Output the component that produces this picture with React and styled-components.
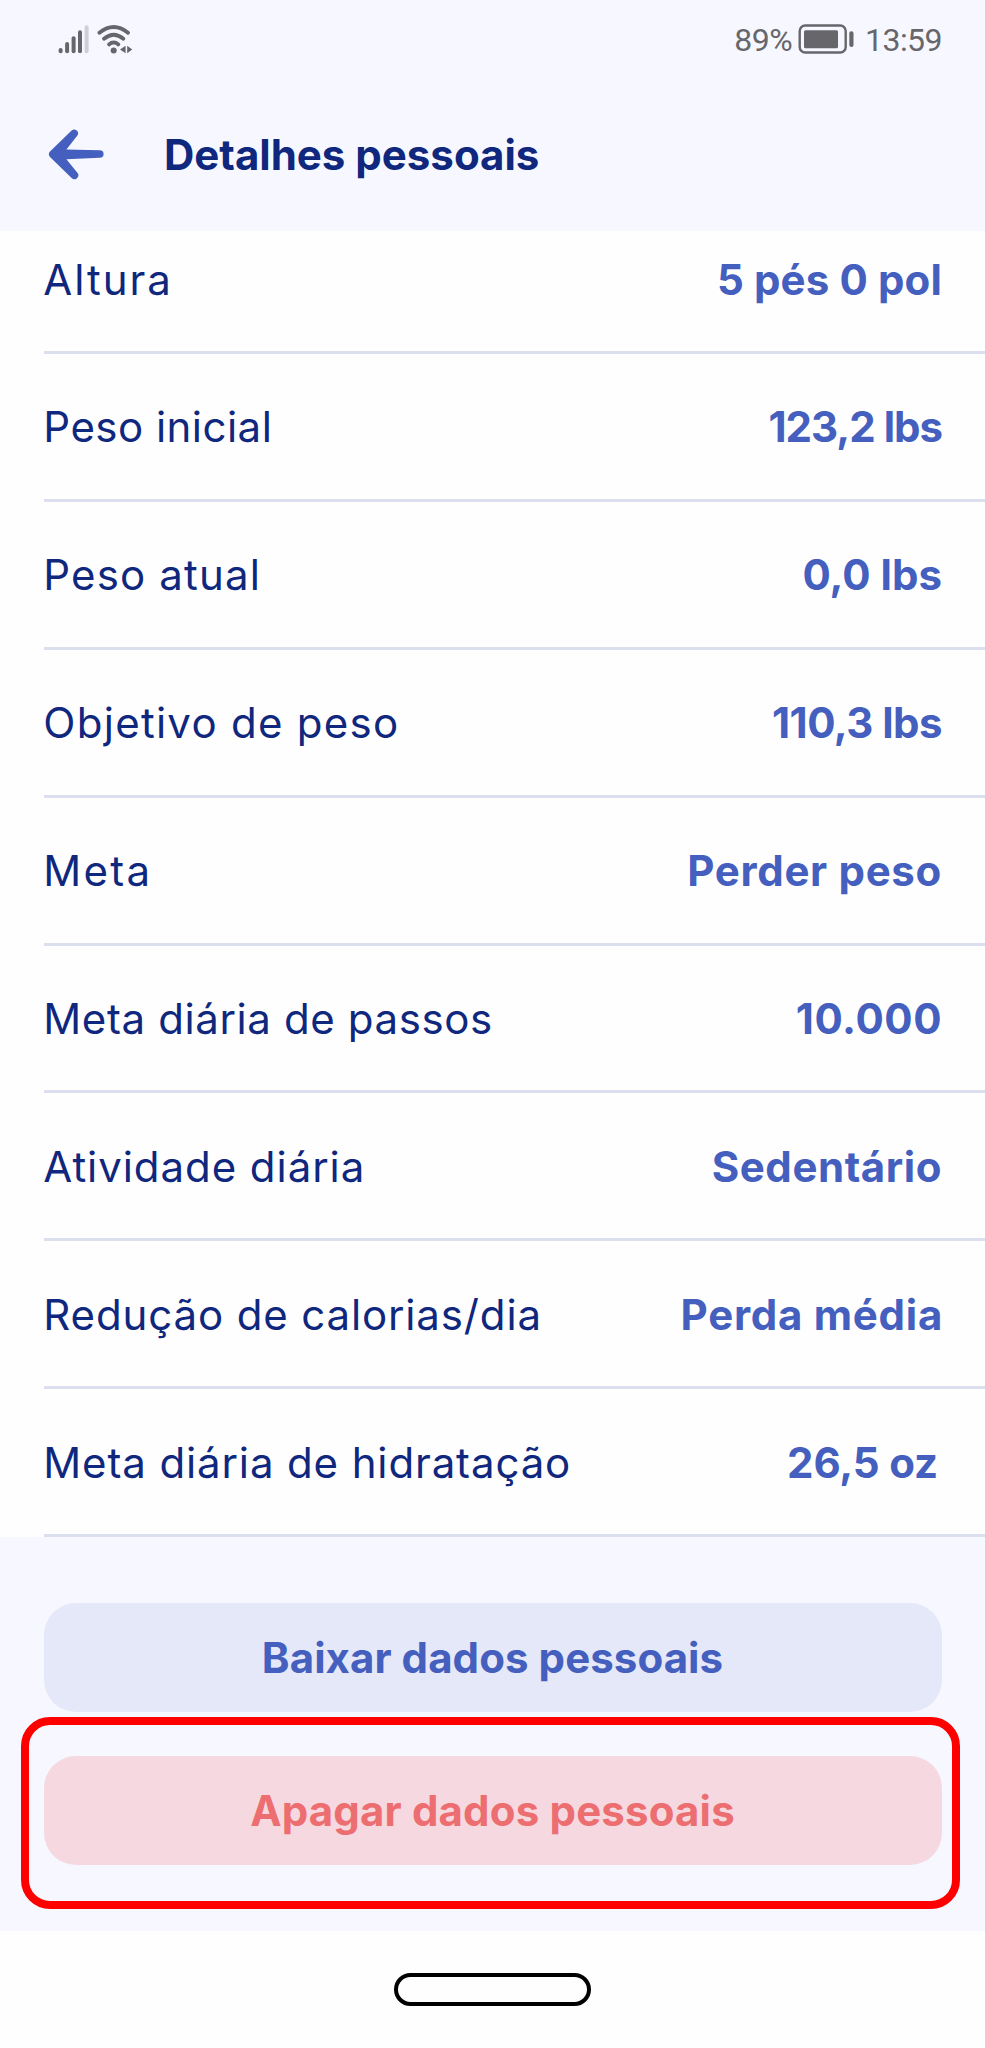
import React from "react";
import styled, { createGlobalStyle } from "styled-components";

const details = [
  { label: "Altura", value: "5 pés 0 pol", track: 1.97, valueTrack: 0.13 },
  { label: "Peso inicial", value: "123,2 lbs", track: 0.47, valueTrack: -1.01 },
  { label: "Peso atual", value: "0,0 lbs", track: 1.15, valueTrack: 0 },
  { label: "Objetivo de peso", value: "110,3 lbs", track: 1.27, valueTrack: -0.54 },
  { label: "Meta", value: "Perder peso", track: 2.31, valueTrack: 0.68 },
  { label: "Meta diária de passos", value: "10.000", track: 0.61, valueTrack: 0.53 },
  { label: "Atividade diária", value: "Sedentário", track: 0.94, valueTrack: 0.56 },
  { label: "Redução de calorias/dia", value: "Perda média", track: 0.86, valueTrack: 0.73, end: -1 },
  { label: "Meta diária de hidratação", value: "26,5 oz", track: 0.87, valueTrack: -0.16, end: 4 },
];

const SignalIcon = () => (
  <svg width="32" height="30" viewBox="58 23 32 30" strokeWidth="4" strokeLinecap="round">
    <g stroke="#66666b">
      <path d="M60.6 49v1.2" />
      <path d="M67.1 43v7.2" />
      <path d="M73.6 37.2v13" />
      <path d="M80 31.2v19" />
    </g>
    <path d="M86.6 26.2v24" stroke="#cfcfd6" />
  </svg>
);

const WifiIcon = () => (
  <svg width="36" height="30" viewBox="97 23 36 30" fill="none" stroke="#66666b" strokeWidth="3.8" strokeLinecap="round">
    <path d="M99.4 31.8Q113.7 20.2 128 31.8" />
    <path d="M104 37.8Q113.7 29.6 123.4 37.8" />
    <path d="M109 43.4Q113.7 39.6 118.4 43.4" />
    <circle cx="113.7" cy="49.4" r="3" fill="#66666b" stroke="none" />
    <path d="M125.6 44.8v7.4l-5.6-3.7zM127.2 44.8v7.4l5-3.7z" fill="#66666b" stroke="none" />
  </svg>
);

const BatteryIcon = () => (
  <svg width="56" height="30" viewBox="799 23.7 56 30" fill="none">
    <rect x="800.7" y="25.2" width="46" height="27" rx="5.5" stroke="#66666b" strokeWidth="2.4" />
    <rect x="805" y="30" width="34" height="18" rx="1.5" fill="#66666b" />
    <rect x="850.3" y="31" width="4.2" height="15.6" rx="2" fill="#66666b" />
  </svg>
);

const BackIcon = () => (
  <svg width="56" height="52" viewBox="48 128 56 52">
    <path
      d="M50 151.6L71.6 130.5A3.9 3.9 0 0 1 77.4 135.6L66.4 149.4L99.8 150.2A3.8 3.8 0 0 1 99.8 157.8L66.4 159.2L77.4 172.8A3.9 3.9 0 0 1 71.6 178L50 156.9Q47.6 154.2 50 151.6Z"
      fill="#455fbe"
    />
  </svg>
);

const App = () => {
  return (
    <Screen>
      <GlobalStyle />
      <StatusBar>
        <StatusGroup>
          <SignalIcon />
          <WifiIcon />
        </StatusGroup>
        <StatusGroup>
          <StatusText>89%</StatusText>
          <BatteryIcon />
          <Clock>13:59</Clock>
        </StatusGroup>
      </StatusBar>

      <Header>
        <BackButton aria-label="Voltar">
          <BackIcon />
        </BackButton>
        <Title>Detalhes pessoais</Title>
      </Header>

      <List>
        {details.map((item) => (
          <Row key={item.label}>
            <Label $track={item.track}>{item.label}</Label>
            <Value $track={item.valueTrack} $end={item.end}>
              {item.value}
            </Value>
          </Row>
        ))}
      </List>

      <Actions>
        <ActionButton $track={0.07}>Baixar dados pessoais</ActionButton>
        <DeleteArea>
          <ActionButton $danger $track={0.17}>
            Apagar dados pessoais
          </ActionButton>
          <Highlight />
        </DeleteArea>
      </Actions>

      <NavBar>
        <HomePill />
      </NavBar>
    </Screen>
  );
};

export default App;

const GlobalStyle = createGlobalStyle`
  * {
    box-sizing: border-box;
  }

  body {
    margin: 0;
    font-family: "Inter", "Liberation Sans", sans-serif;
  }
`;

const Screen = styled.div`
  display: flex;
  flex-direction: column;
  width: 985px;
  height: 2048px;
  background: #f7f8ff;
  overflow: hidden;
`;

const StatusBar = styled.div`
  display: flex;
  align-items: center;
  justify-content: space-between;
  height: 77px;
  padding: 0 43px 0 58px;
`;

const StatusGroup = styled.div`
  display: flex;
  align-items: center;

  svg + svg {
    margin-left: 7px;
  }
`;

const StatusText = styled.span`
  margin-right: 6px;
  padding-top: 2px;
  color: #66666b;
  font-family: "Roboto", sans-serif;
  font-size: 32px;
  font-weight: 400;
  line-height: 40px;
  letter-spacing: -0.55px;
`;

const Clock = styled(StatusText)`
  margin: 0 0 0 11px;
`;

const Header = styled.header`
  display: flex;
  align-items: center;
  height: 154px;
  padding: 0 48px;
`;

const BackButton = styled.button`
  display: flex;
  padding: 0;
  border: none;
  background: none;
  cursor: pointer;
`;

const Title = styled.h1`
  margin: 0 0 0 60px;
  padding-top: 1px;
  color: #10277e;
  font-size: 42px;
  font-weight: 700;
  line-height: 56px;
`;

/* scrolled to the end, so the first row is cut by the header */
const List = styled.div`
  display: flex;
  flex-direction: column;
  justify-content: flex-end;
  height: 1306px;
  background: #fefefe;
  overflow: hidden;
`;

const Row = styled.div`
  display: flex;
  flex-shrink: 0;
  align-items: center;
  justify-content: space-between;
  height: 147.875px;
  margin-left: 44px;
  padding: 2px 43px 0 0;
  border-bottom: 3px solid #dcdfee;
  font-size: 42px;
  line-height: 56px;
  white-space: nowrap;
`;

const Label = styled.span`
  margin-left: -0.7px;
  color: #10277e;
  letter-spacing: ${(props) => props.$track}px;
`;

const Value = styled.span`
  margin-right: ${(props) => props.$end || 0}px;
  color: #455fbe;
  font-weight: 700;
  letter-spacing: ${(props) => props.$track}px;
`;

const Actions = styled.div`
  display: flex;
  flex-direction: column;
  gap: 44px;
  height: 394px;
  padding: 66px 43.5px 0;
`;

const ActionButton = styled.button`
  width: 100%;
  height: 109px;
  padding: 0;
  border: none;
  border-radius: 32px;
  background: ${(props) => (props.$danger ? "#f6d9e0" : "#e4e8f8")};
  color: ${(props) => (props.$danger ? "#ec6e70" : "#455fbe")};
  font-family: inherit;
  font-size: 42px;
  font-weight: 700;
  line-height: 56px;
  letter-spacing: ${(props) => props.$track}px;
  cursor: pointer;
`;

const DeleteArea = styled.div`
  position: relative;
  height: 109px;
`;

const Highlight = styled.div`
  position: absolute;
  top: -39px;
  right: -18.5px;
  bottom: -44px;
  left: -23px;
  border: 8px solid #ff0000;
  border-radius: 29px;
  pointer-events: none;
`;

const NavBar = styled.div`
  display: flex;
  align-items: center;
  justify-content: center;
  height: 117px;
  background: #fefefe;
`;

const HomePill = styled.div`
  width: 197px;
  height: 33px;
  border: 4px solid #000000;
  border-radius: 17px;
`;
